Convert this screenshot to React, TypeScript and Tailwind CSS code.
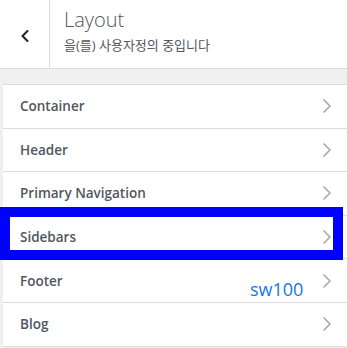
import { ChevronLeft, ChevronRight } from 'lucide-react';

const items = ['Container', 'Header', 'Primary Navigation', 'Sidebars', 'Footer', 'Blog'];

const App = () => {
    return (
        <div
            className="relative w-[347px] h-[348px] overflow-hidden bg-[#f0f0f1]"
            style={{ fontFamily: '"Open Sans", "Noto Sans CJK KR", sans-serif' }}
        >
            {/* Header */}
            <div className="flex h-[69px] bg-white border-b border-[#dcdcde]">
                <div className="w-[50px] flex items-center justify-center border-r border-[#dcdcde] pt-[4px]">
                    <ChevronLeft className="w-5 h-5 text-[#1d2327]" strokeWidth={2.5} />
                </div>
                <div className="pl-[14px] pt-[7px]">
                    <p className="text-[20px] leading-[26px] font-light text-[#50575e]">Layout</p>
                    <p className="text-[13px] leading-[18px] mt-[3px] text-[#50575e]">을(를) 사용자정의 중입니다</p>
                </div>
            </div>

            {/* Sections */}
            <div className="mt-[15px] ml-[3px] border-t border-[#dcdcde]">
                {items.map((item) => (
                    <div
                        key={item}
                        className="flex items-center justify-between h-[43.6px] bg-white border-b border-[#dcdcde] pl-[17px] pr-[8px]"
                    >
                        <span className="text-[13.5px] font-[550] text-[#50575e]">{item}</span>
                        <ChevronRight className="w-6 h-6 text-[#a7aaad]" strokeWidth={1.7} />
                    </div>
                ))}
            </div>

            {/* Annotation overlays */}
            <div className="absolute left-0 top-[207px] w-[343px] h-[53px] border-[10px] border-[#0000ff]" />
            <span className="absolute left-[250px] top-[278px] text-[18px] leading-[22px] text-[#1677e0]">sw100</span>
        </div>
    );
};

export default App;
